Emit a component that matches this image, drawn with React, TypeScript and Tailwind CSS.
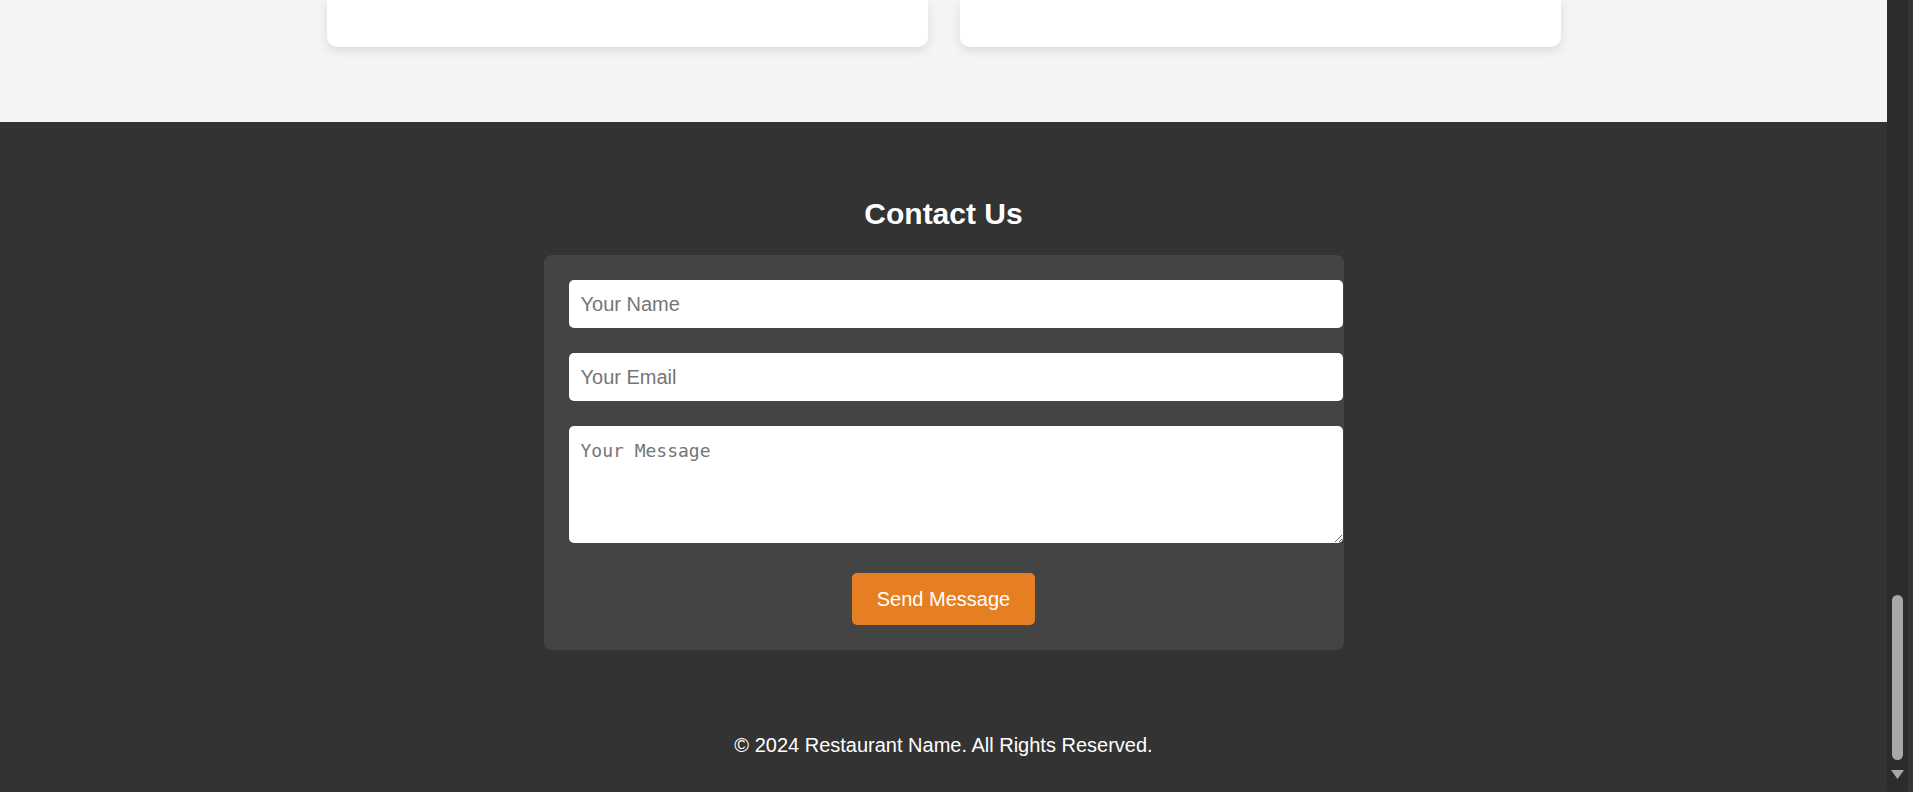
import React from 'react';

const sans = { fontFamily: '"Liberation Sans", Arial, sans-serif' };

// fake window scrollbar, page is scrolled to the bottom
const ScrollBar: React.FC = () => (
  <div className="flex w-[26px] shrink-0 bg-[#363636]">
    <div className="flex w-[21px] flex-col items-center rounded-b-[4px] bg-[#2c2c2c]">
      <div className="mt-[595px] h-[165px] w-[11px] rounded-full bg-[#a8a8a8]" />
      <svg className="mt-[10px]" width="13" height="9" viewBox="0 0 13 9">
        <polygon points="0,0 13,0 6.5,9" fill="#a8a8a8" />
      </svg>
    </div>
  </div>
);

const App: React.FC = () => {
  return (
    <div className="flex h-[792px] overflow-hidden" style={sans}>
      <div className="flex min-w-0 flex-1 flex-col">
        {/* Bottom of the cards section */}
        <section className="h-[122px] shrink-0 bg-[#f4f4f4]">
          <div className="mx-auto grid w-[1234px] grid-cols-2 gap-[32px]">
            <div className="h-[47px] rounded-b-[10px] bg-white shadow-[0_4px_10px_rgba(0,0,0,0.1)]" />
            <div className="h-[47px] rounded-b-[10px] bg-white shadow-[0_4px_10px_rgba(0,0,0,0.1)]" />
          </div>
        </section>

        {/* Contact */}
        <section className="flex flex-1 flex-col bg-[#333333] pt-[74px] text-white">
          <h2 className="text-center text-[30px] font-bold leading-[35px]">Contact Us</h2>

          <form
            className="mx-auto mt-[24px] w-[800px] rounded-[8px] bg-[#444444] p-[25px]"
            onSubmit={(e) => e.preventDefault()}
          >
            <input
              type="text"
              placeholder="Your Name"
              className="mb-[25px] block h-[48px] w-[774px] rounded-[5px] bg-white px-[12px] text-[20px] text-black outline-none placeholder:text-[#757575]"
            />
            <input
              type="email"
              placeholder="Your Email"
              className="mb-[25px] block h-[48px] w-[774px] rounded-[5px] bg-white px-[12px] text-[20px] text-black outline-none placeholder:text-[#757575]"
            />
            <textarea
              placeholder="Your Message"
              className="block h-[117px] w-[774px] rounded-[5px] bg-white px-[12px] pt-[11px] text-[18px] text-black outline-none placeholder:text-[#757575]"
              style={{ fontFamily: '"DejaVu Sans Mono", "Liberation Mono", monospace' }}
            />
            <div className="mt-[30px] flex justify-center">
              <button
                type="submit"
                className="h-[52px] rounded-[5px] bg-[#e67e22] px-[25px] text-[20px] text-white"
              >
                Send Message
              </button>
            </div>
          </form>

          <footer className="mt-[84px] text-center text-[20px] leading-[23px]">
            © 2024 Restaurant Name. All Rights Reserved.
          </footer>
        </section>
      </div>
      <ScrollBar />
    </div>
  );
};

export default App;
